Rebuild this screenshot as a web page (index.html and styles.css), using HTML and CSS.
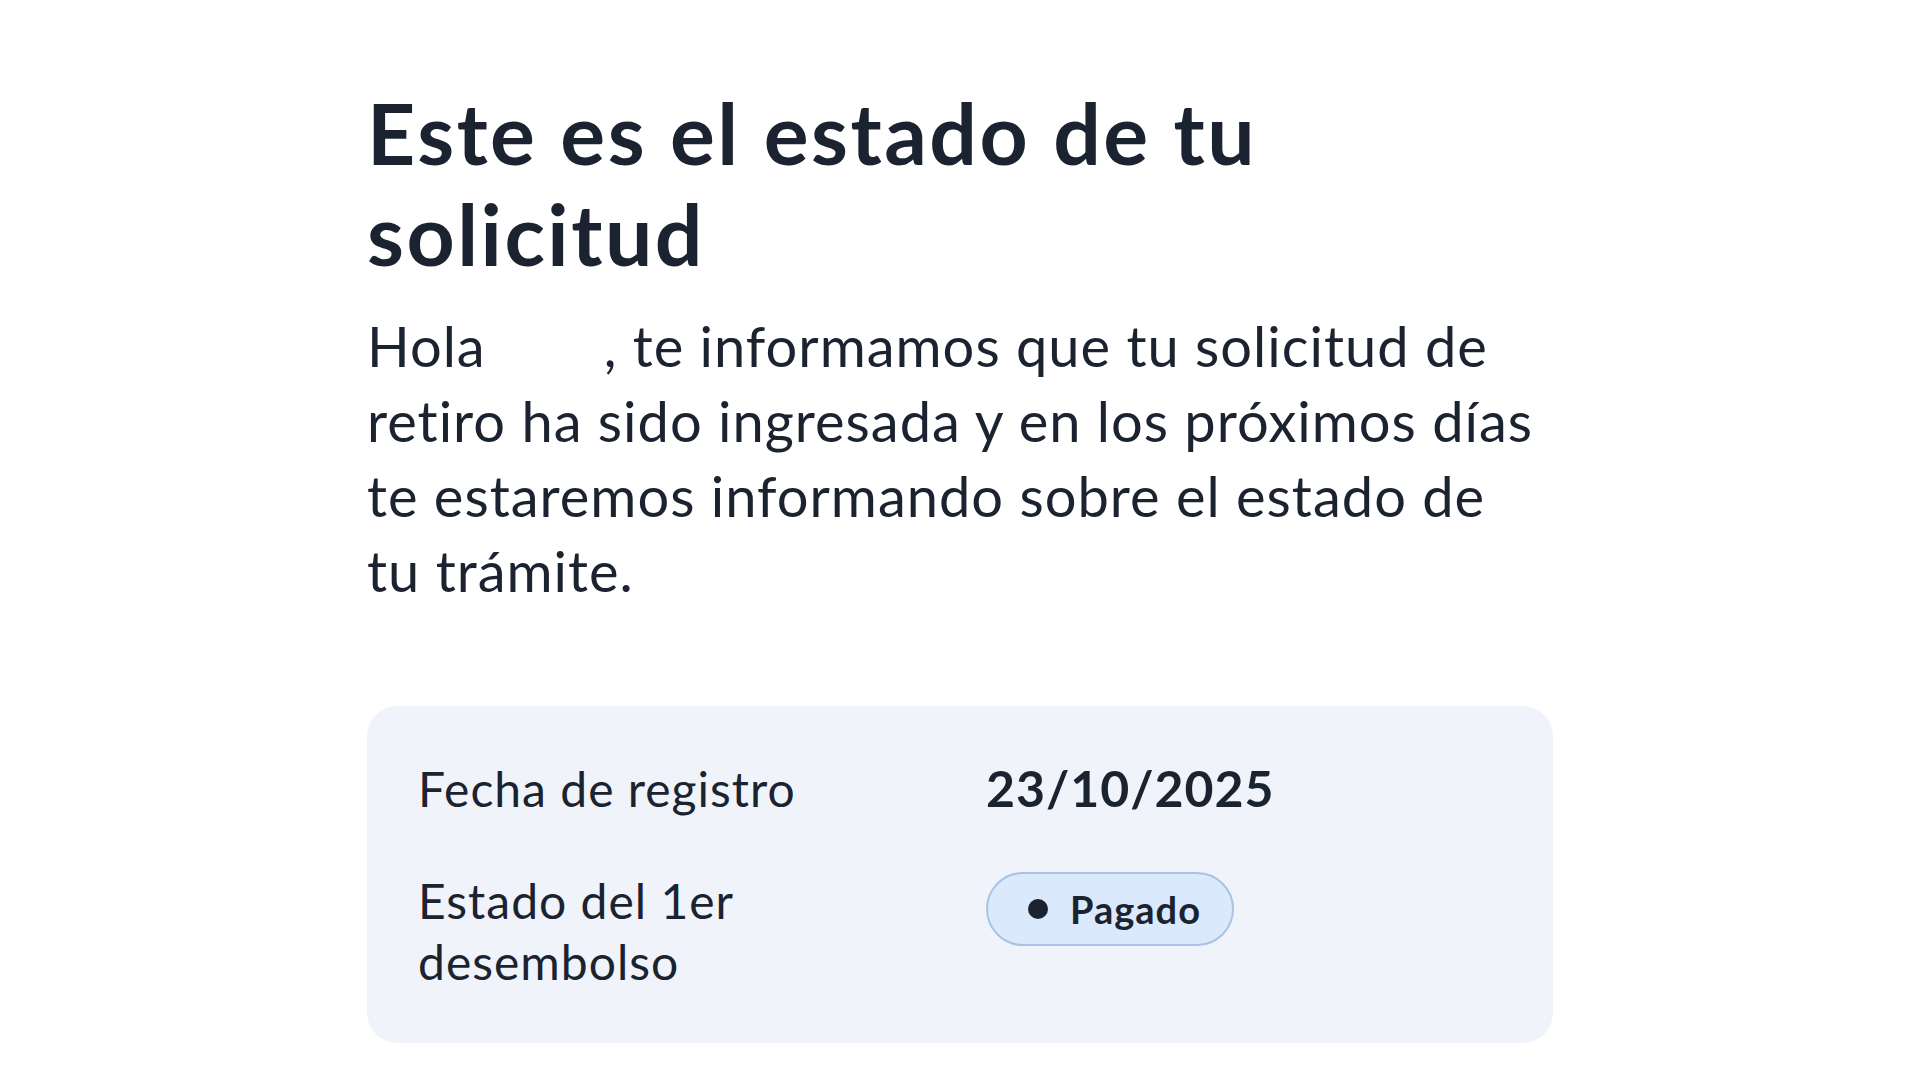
FILE: index.html
```html
<!DOCTYPE html>
<html lang="es">
<head>
    <meta charset="UTF-8">
    <meta name="viewport" content="width=device-width, initial-scale=1.0">
    <title>Estado de tu solicitud</title>
    <link rel="stylesheet" href="styles.css">
</head>
<body>
    <main class="container">
        <h1 class="title">Este es el estado de tu solicitud</h1>
        <p class="intro"><span class="greet">Hola</span>, te informamos que tu solicitud de retiro ha sido ingresada y en los próximos días te estaremos informando sobre el estado de tu trámite.</p>

        <!-- Resumen del retiro -->
        <section class="summary">
            <div class="row">
                <div class="label">Fecha de registro</div>
                <div class="value">23/10/2025</div>
            </div>
            <div class="row">
                <div class="label">Estado del 1er desembolso</div>
                <div class="value">
                    <span class="badge"><span class="dot"></span>Pagado</span>
                </div>
            </div>
        </section>
    </main>
</body>
</html>
```

FILE: styles.css
```css
body {
    font-family: Lato, "Noto Sans", sans-serif;
    background-color: #ffffff;
    color: #1b2330;
    margin: 0;
}
.container {
    width: 1186px;
    margin-left: 367px;
    padding-top: 82px;
}
.title {
    font-size: 84px;
    line-height: 101px;
    font-weight: 700;
    letter-spacing: 2.5px;
    width: 980px;
    margin: 0;
}
.intro {
    font-size: 56px;
    line-height: 75px;
    letter-spacing: 1px;
    margin: 24px 0 0;
}
/* espacio reservado para el nombre del afiliado */
.greet {
    margin-right: 118px;
}
.summary {
    margin-top: 98px;
    background-color: #f0f4fa;
    border-radius: 30px;
    padding: 52px 50px 51px 51px;
    display: flex;
    flex-direction: column;
    gap: 51px;
}
.row {
    display: grid;
    grid-template-columns: 568px 1fr;
    align-items: start;
}
.label {
    font-size: 48px;
    line-height: 61px;
    letter-spacing: 1px;
    width: 420px;
}
.value {
    font-size: 50px;
    line-height: 61px;
    font-weight: 700;
    letter-spacing: 1px;
}
.badge {
    display: inline-flex;
    align-items: center;
    gap: 22px;
    height: 70px;
    padding: 0 31px 0 40px;
    background-color: #dbe9fd;
    border: 2px solid #a8c3e3;
    border-radius: 40px;
    font-size: 38px;
    font-weight: 700;
    letter-spacing: 1px;
}
.dot {
    width: 20px;
    height: 20px;
    border-radius: 50%;
    background-color: #1b2330;
}
```
